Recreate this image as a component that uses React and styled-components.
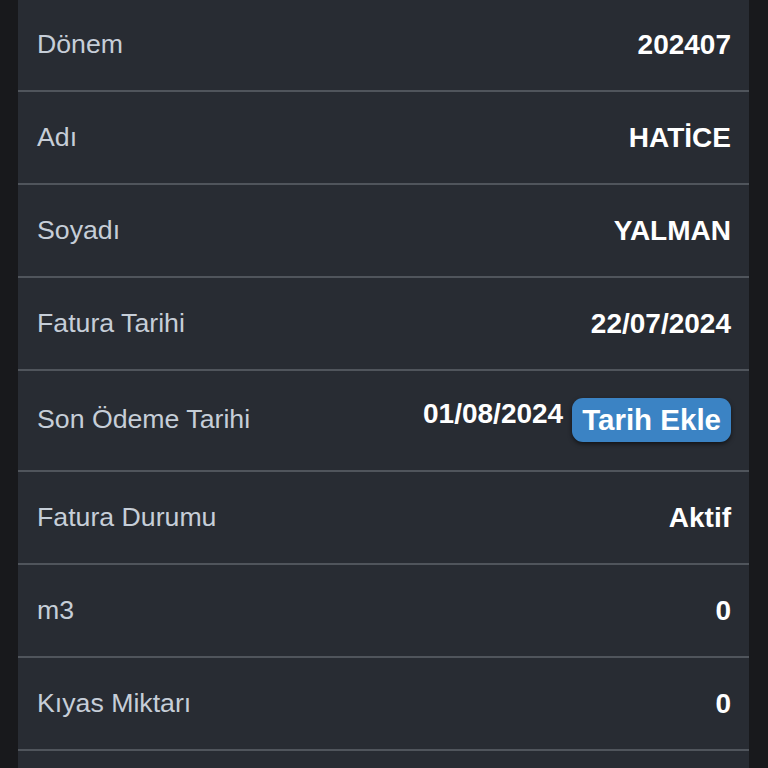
import React from 'react';
import styled, { createGlobalStyle } from 'styled-components';

const rows = [
  { label: 'Dönem', value: '202407' },
  { label: 'Adı', value: 'HATİCE' },
  { label: 'Soyadı', value: 'YALMAN' },
  { label: 'Fatura Tarihi', value: '22/07/2024' },
  { label: 'Son Ödeme Tarihi', value: '01/08/2024', action: 'Tarih Ekle' },
  { label: 'Fatura Durumu', value: 'Aktif' },
  { label: 'm3', value: '0' },
  { label: 'Kıyas Miktarı', value: '0' },
];

export default function App() {
  return (
    <React.Fragment>
      <GlobalStyle />
      <Page>
        <Card>
          {rows.map((row) => (
            <Row key={row.label} tall={!!row.action}>
              <Label>{row.label}</Label>
              {row.action ? (
                <ValueGroup>
                  <Value compact>{row.value}</Value>
                  <ActionButton>{row.action}</ActionButton>
                </ValueGroup>
              ) : (
                <Value>{row.value}</Value>
              )}
            </Row>
          ))}
          {/* next row, scrolled below the fold */}
          <Row />
        </Card>
      </Page>
    </React.Fragment>
  );
}

const GlobalStyle = createGlobalStyle`
  html, body {
    margin: 0;
    padding: 0;
    background: #18191c;
    font-family: "Liberation Sans", Arial, sans-serif;
  }
`;

const Page = styled.div`
  width: 768px;
  height: 768px;
  overflow: hidden;
  background: #18191c;
`;

const Card = styled.div`
  margin: -1px 19px 0 18px;
  background: #282c33;
  display: flex;
  flex-direction: column;
`;

const Row = styled.div`
  display: flex;
  align-items: center;
  justify-content: space-between;
  box-sizing: border-box;
  flex-shrink: 0;
  height: ${(p) => (p.tall ? '101px' : '93px')};
  padding: ${(p) => (p.tall ? '0 18px 2px 19px' : '0 18px 0 19px')};
  border-bottom: 2px solid #50555c;
`;

const Label = styled.div`
  font-size: 26.7px;
  color: #c6ced8;
`;

const ValueGroup = styled.div`
  display: flex;
  align-items: flex-start;
  gap: 9px;
`;

const Value = styled.div`
  font-size: 28px;
  font-weight: 700;
  color: #ffffff;
  line-height: ${(p) => (p.compact ? '32px' : 'normal')};
`;

const ActionButton = styled.button`
  height: 44px;
  padding: 0 10px;
  border: none;
  border-radius: 11px;
  background: #3b83c4;
  color: #ffffff;
  font-family: "Liberation Sans", Arial, sans-serif;
  font-size: 29.5px;
  font-weight: 700;
  box-shadow: 0 2px 4px rgba(0, 0, 0, 0.55);
`;
